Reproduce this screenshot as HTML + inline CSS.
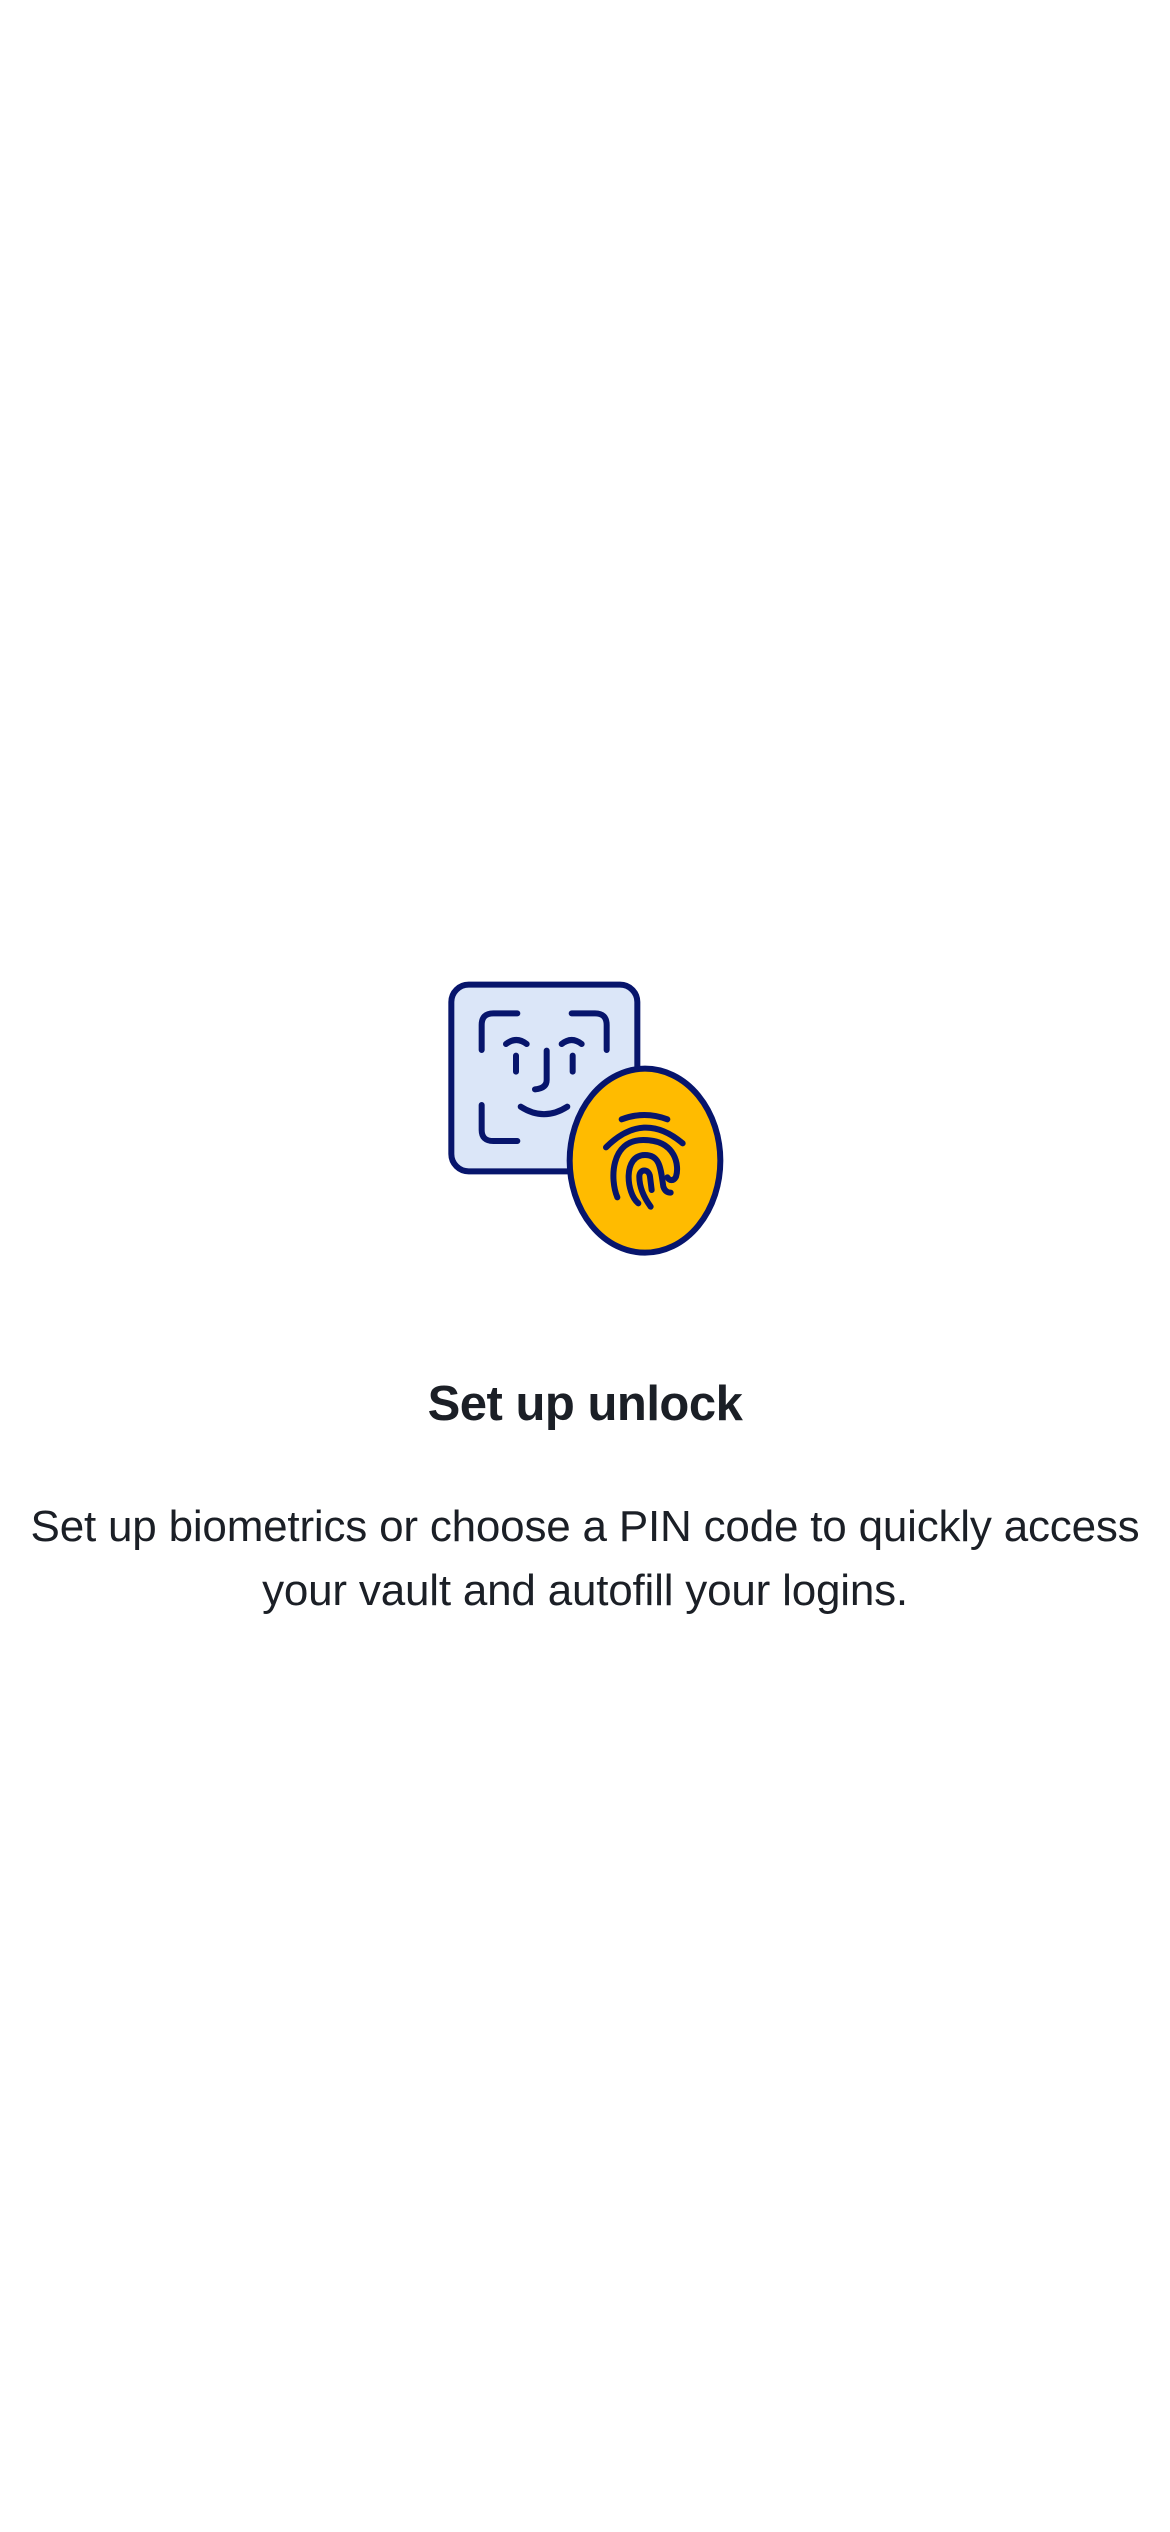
<!DOCTYPE html>
<html><head><meta charset="utf-8"><style>
html,body{margin:0;padding:0;background:#fff;width:1170px;height:2532px;overflow:hidden;font-family:"Liberation Sans",sans-serif;color:#1b1f26}
svg{position:absolute;left:430px;top:960px}
h1{position:absolute;top:1374px;left:0;width:1170px;text-align:center;margin:0;font-size:49px;font-weight:bold;line-height:60px;letter-spacing:-0.5px}
p{position:absolute;top:1495px;left:-20px;width:1210px;text-align:center;margin:0;font-size:44px;line-height:64px;letter-spacing:-0.2px;white-space:nowrap}
</style></head><body>
<svg width="300" height="300" viewBox="0 0 900 900" fill="none" stroke="#07156c" stroke-width="18" stroke-linecap="round" stroke-linejoin="round">
<rect x="64" y="74" width="558" height="560" rx="52" fill="#dbe6f8"/>
<path d="M155,270 V195 Q155,160 190,160 H262"/>
<path d="M425,160 H495 Q530,160 530,195 V270"/>
<path d="M155,435 V510 Q155,543 190,543 H262"/>
<path d="M228,252 Q259,228 290,252"/>
<path d="M395,252 Q425,228 455,252"/>
<path d="M258,287 V335 M428,287 V335"/>
<path d="M350,272 V360 Q350,385 315,388"/>
<path d="M272,440 Q342,485 412,440"/>
<ellipse cx="645" cy="602" rx="226" ry="276" fill="#ffbb00"/>
<path d="M575,478 Q643,452 712,478"/>
<path d="M528,562 Q640,450 758,550"/>
<path d="M562,712 C540,660 540,540 640,540 C740,540 748,620 738,650 C730,665 718,662 712,652"/>
<path d="M625,730 C588,700 578,585 645,585 C692,585 692,630 700,680 C705,695 715,698 722,698"/>
<path d="M662,740 C640,710 628,680 628,650 C628,626 657,625 660,650 L665,690"/>
</svg>
<h1>Set up unlock</h1>
<p>Set up biometrics or choose a PIN code to quickly access<br>your vault and autofill your logins.</p>
</body></html>
